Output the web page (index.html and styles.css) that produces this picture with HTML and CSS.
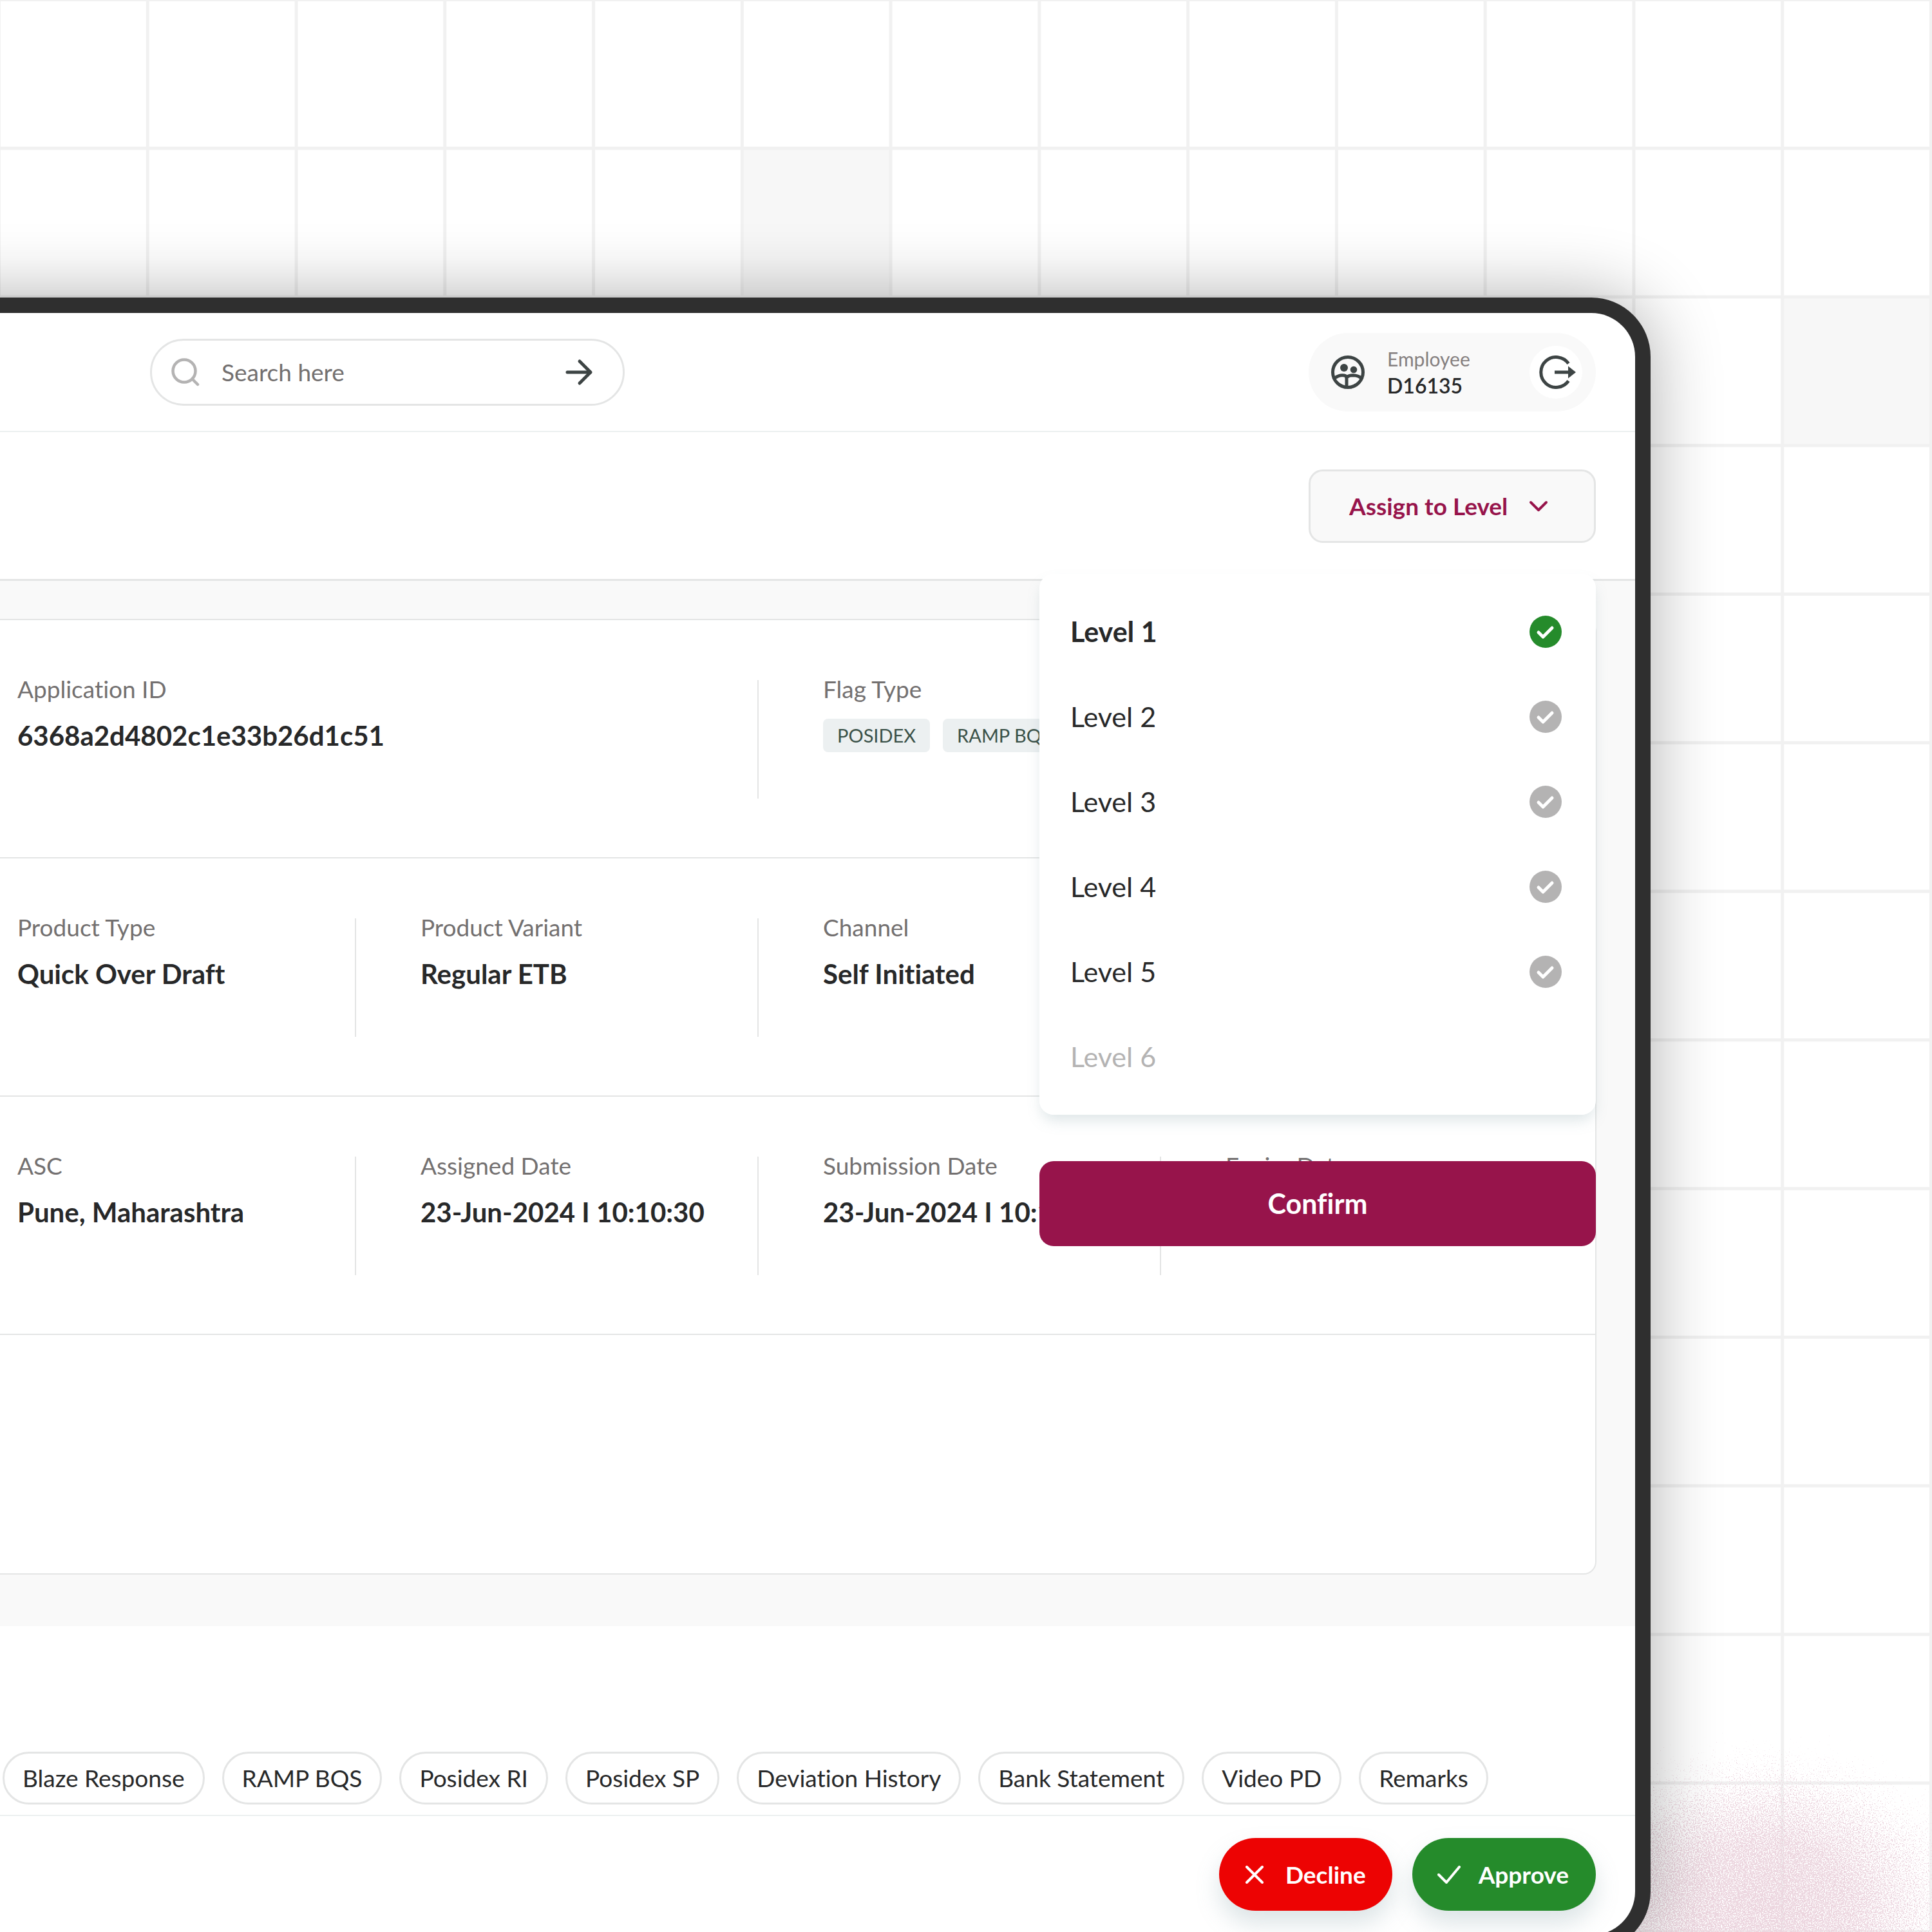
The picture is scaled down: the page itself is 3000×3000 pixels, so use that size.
FILE: index.html
```html
<!DOCTYPE html>
<html lang="en">
<head>
<meta charset="utf-8">
<meta name="viewport" content="width=device-width, initial-scale=1">
<title>Application review</title>
<link rel="stylesheet" href="styles.css">
</head>
<body>
<div class="stage">
  <svg class="glow" viewBox="0 0 800 600" aria-hidden="true">
    <defs>
      <radialGradient id="glow-fade">
        <stop offset="0" stop-color="#ecd6df" stop-opacity=".7"/>
        <stop offset=".35" stop-color="#ecd6df" stop-opacity=".66"/>
        <stop offset=".6" stop-color="#ecd6df" stop-opacity=".54"/>
        <stop offset=".8" stop-color="#ecd6df" stop-opacity=".38"/>
        <stop offset="1" stop-color="#ecd6df" stop-opacity=".2"/>
      </radialGradient>
      <filter id="grain" x="0" y="0" width="100%" height="100%" color-interpolation-filters="sRGB">
        <feTurbulence type="fractalNoise" baseFrequency=".55" numOctaves="2" seed="4" result="noise"/>
        <feColorMatrix in="noise" type="matrix" values="0 0 0 0 0  0 0 0 0 0  0 0 0 0 0  1 0 0 0 0" result="mask"/>
        <feComposite in="SourceAlpha" in2="mask" operator="arithmetic" k2="1" k3="1" k4="-.6" result="sum"/>
        <feComponentTransfer in="sum" result="dots"><feFuncA type="linear" slope="8" intercept="-3.6"/></feComponentTransfer>
        <feFlood flood-color="#ecd6df"/>
        <feComposite in2="dots" operator="in"/>
      </filter>
    </defs>
    <g filter="url(#grain)"><ellipse cx="400" cy="300" rx="390" ry="290" fill="url(#glow-fade)"/></g>
  </svg>

  <div class="device">
    <header class="topbar">
      <form class="search" role="search">
        <svg class="icon-search" viewBox="0 0 44 44" aria-hidden="true"><circle cx="20" cy="20" r="17.5"/><path d="M33 33l8 8"/></svg>
        <input type="search" placeholder="Search here" aria-label="Search">
        <button type="submit" aria-label="Submit search">
          <svg class="icon-arrow" viewBox="0 0 44 44" aria-hidden="true"><path d="M4 22h36M23 5l17 17-17 17"/></svg>
        </button>
      </form>
      <div class="profile">
        <svg class="icon-user" viewBox="0 0 52 52" aria-hidden="true">
          <circle class="line" cx="26" cy="26" r="23.5"/>
          <circle cx="20" cy="19" r="6"/><circle cx="35" cy="22" r="5.3"/>
          <path class="line" d="M5.500 35Q13 29.500 20.500 31Q24 31.500 24 36V49M24.500 33.500Q28 30.800 34 30.800Q42 31 47 35.500"/>
        </svg>
        <div class="profile-text"><span class="role">Employee</span><span class="code">D16135</span></div>
        <button class="logout" type="button" aria-label="Log out">
          <svg viewBox="0 0 58 52" aria-hidden="true"><path class="line" d="M45.500 12.500A23.500 23.500 0 1 0 45.500 39.500M24 26h22"/><path d="M45 16.500 57 26 45 35.500z"/></svg>
        </button>
      </div>
    </header>

    <div class="actions">
      <div class="assign">
        <button class="assign-toggle" type="button" aria-expanded="true">Assign to Level
          <svg viewBox="0 0 32 20" aria-hidden="true"><path d="M4 4l12 12L28 4"/></svg>
        </button>
        <form class="menu">
          <fieldset class="levels" aria-label="Level">
            <label class="level">Level 1<input type="radio" name="level" checked></label>
            <label class="level">Level 2<input type="radio" name="level"></label>
            <label class="level">Level 3<input type="radio" name="level"></label>
            <label class="level">Level 4<input type="radio" name="level"></label>
            <label class="level">Level 5<input type="radio" name="level"></label>
            <label class="level">Level 6<input type="radio" name="level" disabled></label>
          </fieldset>
          <button class="confirm" type="button">Confirm</button>
        </form>
      </div>
    </div>

    <main class="content">
      <section class="card">
        <dl class="row">
          <div class="cell wide"><dt>Application ID</dt><dd>6368a2d4802c1e33b26d1c51</dd></div>
          <div class="cell"><dt>Flag Type</dt><dd class="flags"><span class="flag">POSIDEX</span><span class="flag">RAMP BQS</span></dd></div>
        </dl>
        <dl class="row">
          <div class="cell"><dt>Product Type</dt><dd>Quick Over Draft</dd></div>
          <div class="cell"><dt>Product Variant</dt><dd>Regular ETB</dd></div>
          <div class="cell"><dt>Channel</dt><dd>Self Initiated</dd></div>
        </dl>
        <dl class="row">
          <div class="cell"><dt>ASC</dt><dd>Pune, Maharashtra</dd></div>
          <div class="cell"><dt>Assigned Date</dt><dd>23-Jun-2024 I 10:10:30</dd></div>
          <div class="cell"><dt>Submission Date</dt><dd>23-Jun-2024 I 10:10:30</dd></div>
          <div class="cell"><dt>Expiry Date</dt></div>
        </dl>
        <div class="row"></div>
      </section>
    </main>

    <nav class="tabs" aria-label="Reports">
      <button type="button">Blaze Response</button>
      <button type="button">RAMP BQS</button>
      <button type="button">Posidex RI</button>
      <button type="button">Posidex SP</button>
      <button type="button">Deviation History</button>
      <button type="button">Bank Statement</button>
      <button type="button">Video PD</button>
      <button type="button">Remarks</button>
    </nav>

    <footer class="decision">
      <button class="decline" type="button"><svg viewBox="0 0 28 28" aria-hidden="true"><path d="M2 2l24 24M26 2L2 26"/></svg>Decline</button>
      <button class="approve" type="button"><svg viewBox="0 0 36 28" aria-hidden="true"><path d="M2 14l12 12L34 2"/></svg>Approve</button>
    </footer>
  </div>
</div>
</body>
</html>
```
FILE: styles.css
```css
:root {
  --ink: #272829;
  --icon: #3d4444;
  --muted: #737070;
  --faint: #b4b3b3;
  --line: #e4e5e5;
  --line-soft: #ecf0f0;
  --panel: #f9f9f9;
  --brand: #97144b;
  --green: #258b2b;
  --red: #ed0303;
  --cell: calc(100vw / 13);
}

* { box-sizing: border-box; }

body {
  margin: 0;
  background: #fff;
  color: var(--ink);
  font: 400 37px/44px Lato, "Liberation Sans", sans-serif;
  font-variant-ligatures: none;
}

button, input { font: inherit; font-variant-ligatures: inherit; color: inherit; }
button { border: 0; padding: 0; background: none; cursor: pointer; white-space: nowrap; }
svg { display: block; flex: none; fill: none; }

/* Backdrop: square grid with two tinted cells */
.stage {
  position: relative;
  min-height: 100vh;
  overflow: hidden;
  padding: 462px 437px 0 0;
  background:
    linear-gradient(to right, transparent calc(100% - 5px), #f1f1f1 0) 1px 2px / var(--cell) var(--cell),
    linear-gradient(to bottom, transparent calc(100% - 5px), #f1f1f1 0) 1px 2px / var(--cell) var(--cell),
    linear-gradient(#f7f7f7, #f7f7f7) calc(5 * var(--cell)) var(--cell) / var(--cell) var(--cell) no-repeat,
    linear-gradient(#f7f7f7, #f7f7f7) calc(12 * var(--cell)) calc(2 * var(--cell)) / var(--cell) var(--cell) no-repeat,
    #fff;
}

.glow {
  position: absolute;
  right: -140px;
  bottom: -260px;
  width: 800px;
  height: 600px;
}

/* The frame runs past the left edge so its shadow stays even there */
.device {
  position: relative;
  margin: 0 0 -27px -120px;
  padding-left: 120px;
  border: 24px solid #2f2f2f;
  border-left: 0;
  border-radius: 0 92px 92px 0;
  background: #fff;
  box-shadow: 0 0 110px rgba(0, 0, 0, .32);
}

/* Top bar */
.topbar {
  display: flex;
  align-items: center;
  justify-content: space-between;
  padding: 31px 61px 30px 233px;
  border-bottom: 2px solid var(--line-soft);
}

.search {
  display: flex;
  align-items: center;
  width: 737px;
  height: 104px;
  padding: 0 46px 0 30px;
  border: 3px solid var(--line);
  border-radius: 52px;
}
.search input {
  flex: 1;
  min-width: 0;
  margin-left: 34px;
  padding: 0;
  border: 0;
  outline: 0;
  background: none;
}
.search input::placeholder { color: var(--muted); opacity: 1; }
.icon-search { width: 44px; height: 44px; stroke: var(--faint); stroke-width: 4.5; stroke-linecap: round; }
.icon-arrow { width: 44px; height: 44px; stroke: var(--icon); stroke-width: 5; stroke-linecap: round; stroke-linejoin: round; }

.profile {
  display: flex;
  align-items: center;
  width: 446px;
  height: 122px;
  padding: 0 21px 0 35px;
  border-radius: 61px;
  background: var(--panel);
}
.icon-user { width: 52px; height: 52px; fill: var(--icon); }
.profile .line { fill: none; stroke: var(--icon); stroke-width: 5; }
.profile-text { display: grid; margin: 0 auto 0 35px; font-size: 30px; line-height: 42px; }
.role { color: #858080; }
.code { font-size: 32px; font-weight: 600; }
.logout {
  display: grid;
  place-items: center;
  width: 82px;
  height: 82px;
  border-radius: 50%;
  background: #fff;
}
.logout svg { width: 58px; height: 52px; margin-left: 6px; fill: var(--icon); }

/* Assign action and its menu */
.actions {
  display: flex;
  justify-content: flex-end;
  padding: 58px 61px 56px;
  border-bottom: 3px solid var(--line);
}
.assign { position: relative; }
.assign-toggle {
  display: flex;
  align-items: center;
  justify-content: space-between;
  width: 446px;
  height: 114px;
  padding: 0 70px 0 60px;
  border: 3px solid var(--line);
  border-radius: 22px;
  background: var(--panel);
  color: var(--brand);
  font-weight: 700;
}
.assign-toggle svg { width: 32px; height: 20px; stroke: var(--brand); stroke-width: 4; stroke-linecap: round; stroke-linejoin: round; }

.menu {
  position: absolute;
  z-index: 1;
  top: calc(100% + 48px);
  right: 0;
  width: 864px;
}
.levels {
  margin: 0 0 72px;
  padding: 24px 0;
  border: 0;
  border-radius: 22px;
  background: #fff;
  box-shadow: 0 12px 22px -4px rgba(120, 150, 160, .26);
}
.level {
  display: flex;
  align-items: center;
  justify-content: space-between;
  height: 132px;
  padding: 0 53px 0 48px;
  font-size: 43px;
}
.level:has(:checked) { font-weight: 700; }
.level:has(:disabled) { color: var(--faint); }
.level input {
  appearance: none;
  width: 50px;
  height: 50px;
  margin: 0;
  border-radius: 50%;
  background: var(--faint) url("data:image/svg+xml,%3Csvg xmlns='http://www.w3.org/2000/svg' viewBox='0 0 50 50'%3E%3Cpath d='M14 26l7 7 14-14' fill='none' stroke='white' stroke-width='5' stroke-linecap='round' stroke-linejoin='round'/%3E%3C/svg%3E") center / 100%;
}
.level input:checked { background-color: var(--green); }
.level input:disabled { visibility: hidden; }
.confirm {
  display: block;
  width: 100%;
  height: 132px;
  border-radius: 22px;
  background: var(--brand);
  color: #fff;
  font-size: 43px;
  font-weight: 700;
}

/* Application details */
.content { margin-left: -120px; padding: 59px 60px 80px 120px; background: var(--panel); }
.card {
  border: 2px solid var(--line);
  border-left: 0;
  border-radius: 0 20px 20px 0;
  background: #fff;
}
.row {
  display: grid;
  grid-template-columns: 553fr 625fr 625fr 674fr;
  min-height: 370px;
  margin: 0;
  padding: 93px 0 91px;
  border-bottom: 2px solid var(--line);
}
.row:last-child { border-bottom: 0; }
.cell { padding-left: 100px; border-right: 2px solid var(--line); }
.cell:first-child { padding-left: 27px; }
.cell:nth-child(4) { border-right: 0; }
.wide { grid-column: span 2; }
dt { color: var(--muted); line-height: 28px; }
dd { margin: 36px 0 0; font-size: 42px; font-weight: 700; white-space: nowrap; }
.flags { display: flex; gap: 20px; margin-top: 32px; }
.flag {
  padding: 4px 22px;
  border-radius: 8px;
  background: #ecf0f1;
  color: #3a5148;
  font-size: 29px;
  font-weight: 400;
}

/* Report tabs */
.tabs {
  display: flex;
  gap: 27px;
  padding: 195px 61px 16px 4px;
  border-bottom: 2px solid var(--line-soft);
}
.tabs button {
  height: 82px;
  padding: 0 28px;
  border: 3px solid var(--line);
  border-radius: 41px;
}

/* Decision bar */
.decision {
  display: flex;
  justify-content: flex-end;
  gap: 31px;
  padding: 34px 61px 38px;
}
.decision button {
  display: flex;
  align-items: center;
  height: 113px;
  border-radius: 57px;
  color: #fff;
  font-weight: 700;
  box-shadow: 0 20px 36px rgba(120, 150, 160, .26);
}
.decision svg { height: 28px; stroke: #fff; stroke-width: 4; stroke-linecap: round; stroke-linejoin: round; }
.decline { gap: 34px; padding: 0 41px; background: var(--red); }
.decline svg { width: 28px; }
.approve { gap: 28px; padding: 0 42px 0 39px; background: var(--green); }
.approve svg { width: 36px; }
```
